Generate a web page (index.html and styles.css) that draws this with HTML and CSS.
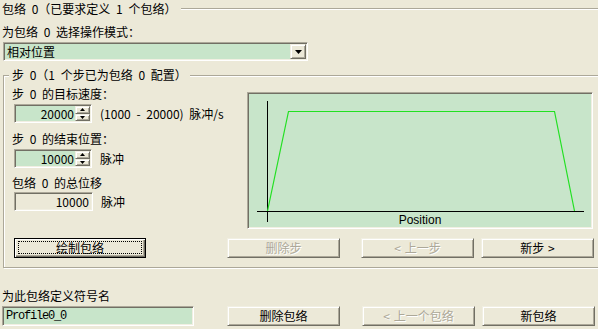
FILE: index.html
```html
<!DOCTYPE html>
<html>
<head>
<meta charset="utf-8">
<link rel="stylesheet" href="styles.css">
</head>
<body>
<div class="dlg">
  <div class="title-row"><span>包络 0（已要求定义 1 个包络）</span><span class="etch"></span></div>
  <div class="lbl mode-lbl">为包络 0 选择操作模式：</div>
  <div class="combo sunken">
    <span class="combo-text">相对位置</span>
    <span class="combo-btn raised"><svg width="7" height="4" viewBox="0 0 7 4"><path d="M0 0h7L3.5 4z" fill="#000"/></svg></span>
  </div>

  <fieldset class="step-grp">
    <legend>步 0（1 个步已为包络 0 配置）</legend>
    <div class="step-body">
      <div class="params">
        <div class="lbl">步 0 的目标速度：</div>
        <div class="field-row r1">
          <div class="spin sunken">
            <span class="val">20000</span>
            <span class="spin-btns">
              <span class="sb raised"><svg width="5" height="3" viewBox="0 0 5 3"><path d="M2.5 0L5 3H0z" fill="#000"/></svg></span>
              <span class="sb raised"><svg width="5" height="3" viewBox="0 0 5 3"><path d="M0 0h5L2.5 3z" fill="#000"/></svg></span>
            </span>
          </div>
          <span class="unit">(1000 - 20000) 脉冲/s</span>
        </div>
        <div class="lbl l2">步 0 的结束位置：</div>
        <div class="field-row r2">
          <div class="spin sunken">
            <span class="val">10000</span>
            <span class="spin-btns">
              <span class="sb raised"><svg width="5" height="3" viewBox="0 0 5 3"><path d="M2.5 0L5 3H0z" fill="#000"/></svg></span>
              <span class="sb raised"><svg width="5" height="3" viewBox="0 0 5 3"><path d="M0 0h5L2.5 3z" fill="#000"/></svg></span>
            </span>
          </div>
          <span class="unit">脉冲</span>
        </div>
        <div class="lbl l3">包络 0 的总位移</div>
        <div class="field-row r3">
          <div class="readonly sunken"><span class="val">10000</span></div>
          <span class="unit">脉冲</span>
        </div>
      </div>
      <div class="graph sunken">
        <svg width="342" height="133" viewBox="0 0 342 133">
          <line x1="18.5" y1="7" x2="18.5" y2="128" stroke="#000" stroke-width="1"/>
          <line x1="8" y1="117.5" x2="335" y2="117.5" stroke="#000" stroke-width="1"/>
          <polyline points="18.5,117 39.5,17.5 305.5,17.5 325.5,117" fill="none" stroke="#22E022" stroke-width="1.2"/>
          <text x="171" y="130" text-anchor="middle" class="axis-label">Position</text>
        </svg>
      </div>
    </div>
    <div class="btn-row">
      <button class="btn default"><span class="focus">绘制包络</span></button>
      <button class="btn disabled b-del" disabled>删除步</button>
      <button class="btn disabled b-prev" disabled>&lt; 上一步</button>
      <button class="btn b-next">新步 &gt;</button>
    </div>
  </fieldset>

  <div class="lbl name-lbl">为此包络定义符号名</div>
  <div class="bottom-row">
    <div class="name-input sunken">Profile0_0</div>
    <button class="btn b-del2">删除包络</button>
    <button class="btn disabled b-prev2" disabled>&lt; 上一个包络</button>
    <button class="btn b-next2">新包络</button>
  </div>
</div>
</body>
</html>
```

FILE: styles.css
```css
* { box-sizing: border-box; }

html, body {
  margin: 0;
  padding: 0;
}

body {
  width: 598px;
  height: 329px;
  overflow: hidden;
  background: #ECE9D8;
  color: #000;
  font: 12px/14px "Noto Sans CJK SC", sans-serif;
  word-spacing: 3px;
}

.dlg {
  padding: 2px 0 0 2px;
}

.sunken {
  border: 1px solid;
  border-color: #ACA899 #FFFFFF #FFFFFF #ACA899;
  box-shadow: inset 1px 1px 0 #716F64, inset -1px -1px 0 #F1EFE2;
}

.raised {
  border: 1px solid;
  border-color: #F1EFE2 #716F64 #716F64 #F1EFE2;
  box-shadow: inset 1px 1px 0 #FFFFFF, inset -1px -1px 0 #ACA899;
  background: #ECE9D8;
}

.title-row {
  display: flex;
  align-items: center;
  gap: 5px;
  height: 14px;
  white-space: nowrap;
}

.etch {
  flex: 1;
  height: 2px;
  border-top: 1px solid #ACA899;
  border-bottom: 1px solid #FFFFFF;
}

.lbl {
  height: 14px;
  white-space: nowrap;
}

.mode-lbl { margin-top: 9px; }

.combo {
  margin: 3px 0 0 1px;
  width: 305px;
  height: 19px;
  display: flex;
  align-items: stretch;
  padding: 1px;
  background: #C8E5CA;
}

.combo-text {
  flex: 1;
  padding-left: 2px;
  line-height: 15px;
}

.combo-btn {
  width: 16px;
  display: flex;
  align-items: center;
  justify-content: center;
}

.step-grp {
  margin: 7px -20px 0 1px;
  padding: 5px 0 9px 8px;
  border: 1px solid #ACA899;
  box-shadow: inset 1px 1px 0 #FFFFFF, 1px 1px 0 #FFFFFF;
  min-width: 0;
}

.step-grp legend {
  padding: 0 3px;
  margin-left: -3px;
  line-height: 14px;
  background: #ECE9D8;
  white-space: nowrap;
}

.step-body {
  display: grid;
  grid-template-columns: 235px 346px;
  align-items: start;
}

.params {
  display: flex;
  flex-direction: column;
}

.field-row {
  display: flex;
  align-items: center;
  gap: 8px;
  margin-left: 2px;
  white-space: nowrap;
}

.r1, .r2 { margin-top: 3px; }
.l2 { margin-top: 9px; }
.l3 { margin-top: 8px; }
.r3 { margin-top: 2px; }

.spin {
  width: 78px;
  height: 19px;
  display: flex;
  padding: 1px;
  background: #C8E5CA;
}

.spin .val, .readonly .val {
  flex: 1;
  text-align: right;
  padding-right: 1px;
  line-height: 15px;
}

.spin-btns {
  width: 15px;
  display: flex;
  flex-direction: column;
}

.sb {
  flex: 1;
  display: flex;
  align-items: center;
  justify-content: center;
}

.readonly {
  width: 79px;
  height: 19px;
  display: flex;
  padding: 1px 2px 1px 1px;
  background: #ECE9D8;
}

.graph {
  margin-top: 5px;
  width: 346px;
  height: 137px;
  padding: 1px;
  background: #C8E5CA;
}

.graph svg { display: block; }

.axis-label {
  font-family: "Liberation Sans", Arial, sans-serif;
  font-size: 12px;
  word-spacing: 0;
  fill: #000;
}

.btn {
  height: 20px;
  width: 113px;
  padding: 0;
  margin: 0;
  font: 12px/14px "Noto Sans CJK SC", sans-serif;
  word-spacing: 1px;
  color: #000;
  background: #ECE9D8;
  border: 1px solid;
  border-color: #F1EFE2 #716F64 #716F64 #F1EFE2;
  box-shadow: inset 1px 1px 0 #FFFFFF, inset -1px -1px 0 #ACA899;
  white-space: nowrap;
}

.btn.disabled {
  color: #ACA899;
  text-shadow: 1px 1px 0 #FFFFFF;
}

.btn-row {
  display: flex;
  margin-top: 9px;
}

.btn.default {
  margin-left: 2px;
  width: 132px;
  border: 1px solid #000;
  box-shadow: inset 1px 1px 0 #FFFFFF, inset -1px -1px 0 #716F64, inset -2px -2px 0 #ACA899;
  padding: 2px 3px 3px 3px;
  display: flex;
}

.focus {
  flex: 1;
  border: 1px dotted #000;
  line-height: 12px;
  text-align: center;
}

.b-del { margin-left: 81px; }
.b-prev { margin-left: 21px; }
.b-next { margin-left: 7px; }

.name-lbl { margin-top: 21px; }

.bottom-row {
  display: flex;
  margin-top: 3px;
}

.name-input {
  width: 192px;
  height: 20px;
  padding: 2px 0 0 3px;
  background: #C8E5CA;
  font: 12px/15px "Liberation Mono", monospace;
  letter-spacing: -1.2px;
  word-spacing: 0;
}

.b-del2 { margin-left: 33px; }
.b-prev2 { margin-left: 22px; }
.b-next2 { margin-left: 7px; }
```
